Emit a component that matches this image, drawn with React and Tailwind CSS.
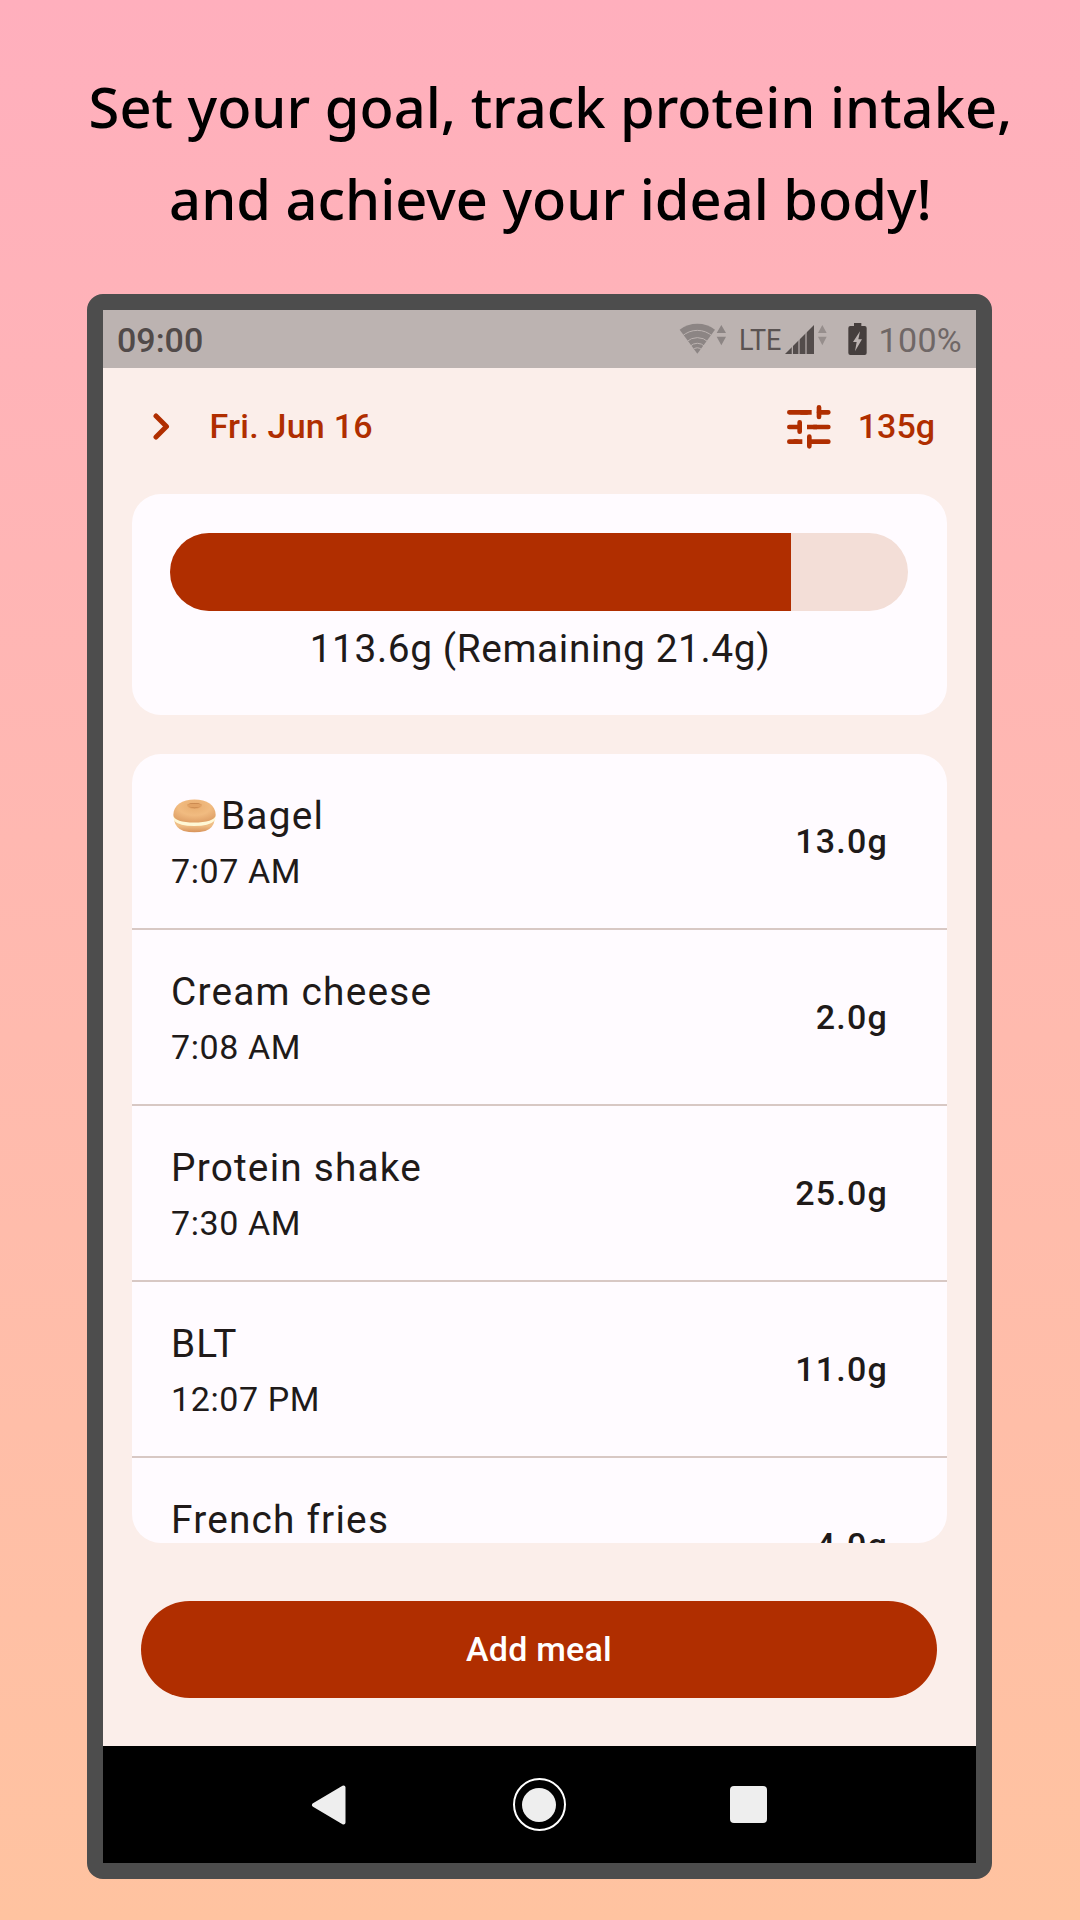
const meals = [
  { name: "Bagel", time: "7:07 AM", protein: "13.0g", bagel: true },
  { name: "Cream cheese", time: "7:08 AM", protein: "2.0g" },
  { name: "Protein shake", time: "7:30 AM", protein: "25.0g" },
  { name: "BLT", time: "12:07 PM", protein: "11.0g" },
  { name: "French fries", time: "", protein: "4.0g" },
];

const goal = 135;
const eaten = 113.6;

function WifiIcon() {
  return (
    <svg width="48" height="34" viewBox="0 0 144 102" fill="#8c8584">
      <path d="M55 95L2 23A89 89 0 0 1 108 23Z" />
      <path
        d="M9 43A68 68 0 0 1 101 43M22 60A48 48 0 0 1 88 60M33 73A31 31 0 0 1 77 73M41 84A18 18 0 0 1 69 84"
        fill="none"
        stroke="#bcb3b1"
        strokeWidth="3"
      />
      <path d="M113 33L127 9L141 33ZM113 44H141L127 70Z" />
    </svg>
  );
}

function SignalIcon() {
  return (
    <svg width="42" height="34" viewBox="0 0 126 102">
      <path d="M0 96L87 9V96Z" fill="#534c4b" />
      <path d="M22 60V96M42 40V96M63 20V96" stroke="#bcb3b1" strokeWidth="3.5" />
      <path d="M99 33L112 9L125 33ZM99 44H125L112 70Z" fill="#968e8c" />
    </svg>
  );
}

function BatteryIcon() {
  return (
    <svg width="19" height="34" viewBox="0 0 57 102">
      <path
        d="M18 3H40V12H50Q56 12 56 18V93Q56 99 50 99H7Q1 99 1 93V18Q1 12 7 12H18Z"
        fill="#453e3d"
      />
      <path d="M36 28L15 60H26L21 88L42 52H31Z" fill="#bcb3b1" />
    </svg>
  );
}

function TuneIcon() {
  return (
    <svg width="44" height="44" viewBox="0 0 132 132" fill="none" stroke="#b02e00" strokeWidth="14">
      <path d="M7 22H60M96 22H124M7 66H38M80 66H124M7 110H30M67 110H124" strokeLinecap="round" />
      <path d="M96 7V36M38 52V80M67 95V124" strokeLinecap="round" />
      <path d="M40 22H74M60 66H90M20 110H46" />
    </svg>
  );
}

function BagelIcon() {
  return (
    <svg width="43" height="34" viewBox="0 0 130 102">
      <defs>
        <radialGradient id="top" cx="0.5" cy="0.3" r="0.7">
          <stop offset="0" stopColor="#e9ae70" />
          <stop offset="0.55" stopColor="#f1bb80" />
          <stop offset="1" stopColor="#dfa067" />
        </radialGradient>
        <linearGradient id="bottom" x1="0" y1="0" x2="0" y2="1">
          <stop offset="0.5" stopColor="#efbd85" />
          <stop offset="1" stopColor="#d8935a" />
        </linearGradient>
      </defs>
      <path d="M3 62Q8 88 32 96Q64 104 98 96Q122 88 126 62Z" fill="url(#bottom)" />
      <path d="M1 50Q2 62 4 66Q18 81 64 81Q110 81 125 66Q129 60 129 50Z" fill="#fff8d6" />
      <path d="M1 48C1 18 28 1 65 1C102 1 129 18 129 48C129 63 100 71 64 71C28 71 1 63 1 48Z" fill="url(#top)" />
      <path d="M42 17Q65 7 88 17Q86 29 65 29Q44 29 42 17Z" fill="#e3a365" />
      <path d="M42 16Q65 8 88 16Q65 12 42 16M47 22Q65 33 83 22Q65 29 47 22Z" fill="#c5834a" />
    </svg>
  );
}

function StatusBar() {
  return (
    <div className="flex h-[58px] shrink-0 items-center bg-[#bcb3b1] px-[14px] text-[34px] leading-[58px]">
      <span className="mr-auto pt-[1px] font-medium text-[#514a49]">09:00</span>
      <WifiIcon />
      <span className="ml-[12px] w-[42px] origin-left scale-x-90 pt-[1px] text-[30px] leading-[58px] text-[#5a5352]">
        LTE
      </span>
      <span className="ml-[4px] flex">
        <SignalIcon />
      </span>
      <span className="ml-[21px] flex">
        <BatteryIcon />
      </span>
      <span className="ml-[12px] pt-[1px] tracking-[0.3px] text-[#6f6766]">100%</span>
    </div>
  );
}

function Header() {
  return (
    <div className="mb-[9px] flex h-[117px] shrink-0 items-center pl-[50px] pr-[41px] text-[34px] font-medium text-[#b02e00]">
      <svg width="17" height="28" viewBox="0 0 17 28" fill="none">
        <path
          d="M3 3L13.5 13.5L3 24"
          stroke="#b02e00"
          strokeWidth="5"
          strokeLinecap="round"
          strokeLinejoin="round"
        />
      </svg>
      <span className="ml-[39.5px] tracking-[0.24px]">Fri. Jun 16</span>
      <span className="ml-auto mr-[27px]">
        <TuneIcon />
      </span>
      <span>{goal}g</span>
    </div>
  );
}

function MealRow({ meal }) {
  return (
    <li className="flex h-[176.1px] shrink-0 items-center justify-between border-b-2 border-[#d8c8c4] pl-[39px] pr-[59px]">
      <div>
        <div className="flex items-center text-[38.8px] leading-[58px] tracking-[1.2px]">
          {meal.bagel && (
            <span className="ml-[2px] mr-[5px]">
              <BagelIcon />
            </span>
          )}
          {meal.name}
        </div>
        <div className="mt-[1px] h-[49px] text-[34px] leading-[50px] tracking-[0.6px]">{meal.time}</div>
      </div>
      <span className="text-[34px] font-medium tracking-[1.2px]">{meal.protein}</span>
    </li>
  );
}

function NavBar() {
  return (
    <div className="flex h-[117px] shrink-0 items-center bg-black pl-[208px] pr-[209px]">
      <svg width="37" height="40" viewBox="0 0 37 40">
        <path
          d="M3 20L32.5 2.5V37.5Z"
          fill="#eee"
          stroke="#eee"
          strokeWidth="4"
          strokeLinejoin="round"
        />
      </svg>
      <div className="mx-auto flex size-[53px] items-center justify-center rounded-full border-2 border-white">
        <div className="size-[34px] rounded-full bg-[#eee]" />
      </div>
      <div className="size-[37px] rounded bg-[#eee]" />
    </div>
  );
}

export default function App() {
  return (
    <div className="flex h-[1920px] w-[1080px] flex-col overflow-hidden bg-linear-to-b from-[#ffafbd] to-[#ffc3a0]">
      <h1 className="ml-[21px] mt-[60px] h-[234px] shrink-0 whitespace-nowrap text-center font-['Noto_Sans',sans-serif] text-[56px] font-medium leading-[92px] text-black">
        Set your goal, track protein intake,
        <br />
        and achieve your ideal body!
      </h1>

      <div className="ml-[87px] flex h-[1585px] w-[905px] shrink-0 flex-col rounded-[16px] border-[16px] border-[#4d4d4d] bg-[#fbeeea] font-[Roboto,sans-serif] text-[#201a19]">
        <StatusBar />
        <Header />

        <div className="mx-[29px] h-[221px] shrink-0 rounded-[29px] bg-[#fffbff] pl-[38px] pr-[39px] pt-[39px]">
          <div className="h-[78px] overflow-hidden rounded-full bg-[#f3ded7]">
            <div className="h-full bg-[#b02e00]" style={{ width: `${(eaten / goal) * 100}%` }} />
          </div>
          <p className="mt-[9px] pl-[2px] text-center text-[38.8px] leading-[58px] tracking-[0.62px]">
            {eaten}g (Remaining {(goal - eaten).toFixed(1)}g)
          </p>
        </div>

        <ul className="mx-[29px] mt-[39px] flex h-[789px] shrink-0 flex-col overflow-hidden rounded-[29px] bg-[#fffbff]">
          {meals.map((meal) => (
            <MealRow key={meal.name} meal={meal} />
          ))}
        </ul>

        <button className="ml-[38px] mr-[39px] mb-[48px] mt-[58px] h-[97px] shrink-0 rounded-full bg-[#b02e00] text-[34px] font-medium tracking-[0.24px] text-white">
          Add meal
        </button>

        <NavBar />
      </div>
    </div>
  );
}
